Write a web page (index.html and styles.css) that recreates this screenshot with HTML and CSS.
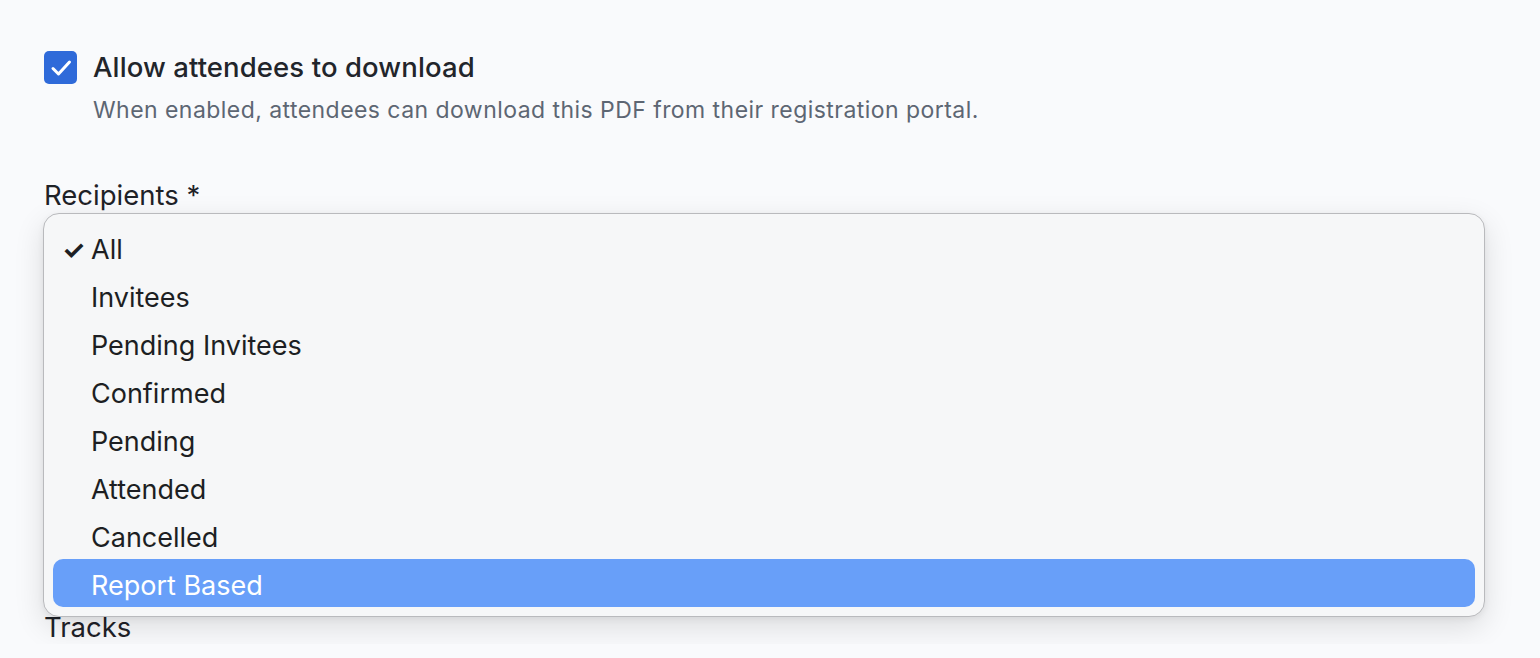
FILE: index.html
```html
<!DOCTYPE html>
<html>
<head>
<meta charset="utf-8">
<link rel="stylesheet" href="styles.css">
</head>
<body>
<div class="page">
  <div class="check-row">
    <span class="checkbox">
      <svg viewBox="0 0 32 32" width="32" height="32"><path d="M8 16.5l5.5 5.5L24.5 10" fill="none" stroke="#fff" stroke-width="3" stroke-linecap="round" stroke-linejoin="round"/></svg>
    </span>
    <div class="check-text">
      <div class="check-label">Allow attendees to download</div>
      <div class="check-desc">When enabled, attendees can download this PDF from their registration portal.</div>
    </div>
  </div>
  <div class="field">
    <div class="field-label">Recipients *</div>
    <div class="select-wrap">
      <ul class="menu">
        <li class="item selected"><span class="tick">✓</span>All</li>
        <li class="item">Invitees</li>
        <li class="item">Pending Invitees</li>
        <li class="item">Confirmed</li>
        <li class="item">Pending</li>
        <li class="item">Attended</li>
        <li class="item">Cancelled</li>
        <li class="item active">Report Based</li>
      </ul>
    </div>
  </div>
  <div class="field next">
    <div class="field-label">Tracks</div>
  </div>
</div>
</body>
</html>
```

FILE: styles.css
```css
html, body {
  margin: 0;
  padding: 0;
  background: #f9fafc;
  font-family: Inter, "Noto Sans", sans-serif;
  color: #1d2026;
}
.page {
  padding: 51px 0 0 44px;
  width: 1442px;
}
.check-row {
  display: flex;
  gap: 16px;
}
.checkbox {
  width: 33px;
  height: 33px;
  border-radius: 5px;
  background: #2f6ad9;
  display: flex;
  align-items: center;
  justify-content: center;
  flex: none;
}
.check-text {
  display: flex;
  flex-direction: column;
}
.check-label {
  font-size: 27.5px;
  line-height: 33px;
  font-weight: 450;
  color: #22252b;
  letter-spacing: 0.1px;
}
.check-desc {
  margin-top: 12px;
  font-size: 23px;
  line-height: 28px;
  color: #5d6673;
  letter-spacing: 0.45px;
}
.field {
  margin-top: 54px;
}
.field.next {
  margin-top: 0;
}
.field-label {
  font-size: 27.5px;
  line-height: 34px;
  color: #1f2228;
}
.select-wrap {
  position: relative;
  height: 398px;
}
.menu {
  position: absolute;
  left: -1px;
  top: 1px;
  width: 1442px;
  margin: 0;
  padding: 9px 9px 9px;
  list-style: none;
  background: #f6f7f8;
  border: 1px solid #b9babd;
  border-radius: 16px;
  box-shadow: 0 10px 30px rgba(0,0,0,0.12), 0 2px 6px rgba(0,0,0,0.06);
  box-sizing: border-box;
  z-index: 2;
}
.item {
  position: relative;
  height: 48px;
  line-height: 53px;
  padding-left: 38px;
  font-size: 27px;
  color: #1d1f23;
  border-radius: 10px;
}
.tick {
  position: absolute;
  left: 9px;
  font-size: 26px;
  font-weight: 700;
}
.item.active {
  background: #689ff9;
  color: #fff;
}
```
